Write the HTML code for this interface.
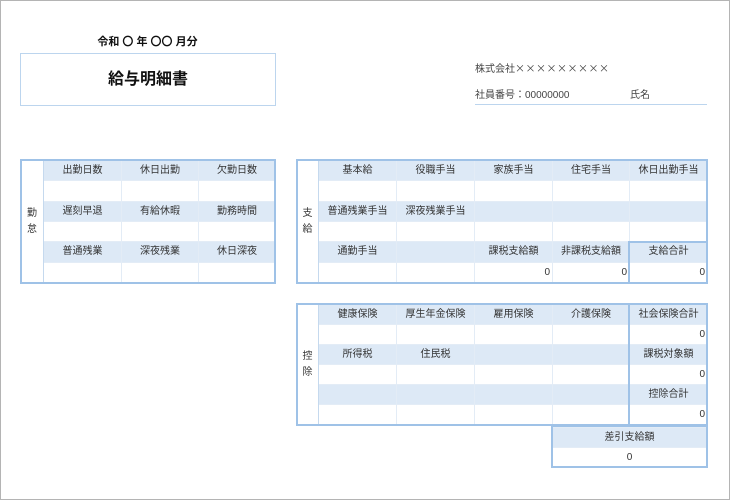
<!DOCTYPE html>
<html><head><meta charset="utf-8"><style>
body{margin:0;width:730px;height:500px;background:#fff;font-family:"Liberation Sans","Noto Sans CJK JP",sans-serif;color:#333;position:relative;overflow:hidden}
.frame{position:absolute;left:0;top:0;width:728px;height:498px;border:1px solid #b4b4b4}
.a{position:absolute}
table{border-collapse:collapse;table-layout:fixed;position:absolute;font-size:10px}
td{border:1px solid #e3ecf6;padding:0;text-align:center;height:19px;line-height:19px;white-space:nowrap;overflow:hidden}
tr.h td{background:#dde9f6}
tr.h td.lab{background:#fff;line-height:16px;border-right:1px solid #c5d9ee}
td.r{text-align:right;padding-right:2px}
.ob{position:absolute;border:2px solid #9fc2e7;box-sizing:border-box;pointer-events:none}
</style></head><body>
<div class="frame"></div>
<div class="a" style="left:20px;top:33px;width:255px;text-align:center;font-size:11px;font-weight:bold;color:#111">令和 〇 年 〇〇 月分</div>
<div class="a" style="left:20px;top:53px;width:254px;height:51px;border:1px solid #bcd5ee;text-align:center;line-height:51px;font-size:16px;font-weight:bold;color:#111">給与明細書</div>
<div class="a" style="left:475px;top:60px;font-size:10px;color:#444">株式会社<span style="font-family:'Noto Sans CJK JP',sans-serif;letter-spacing:0.5px">×××××××××</span></div>
<div class="a" style="left:475px;top:86px;font-size:10px;color:#444">社員番号：00000000</div>
<div class="a" style="left:630px;top:86px;font-size:10px;color:#444">氏名</div>
<div class="a" style="left:475px;top:104px;width:232px;border-top:1px solid #bcd5ee"></div>

<table style="left:20px;top:160px;width:255px;height:123px">
<colgroup><col style="width:23px"><col style="width:78px"><col style="width:77px"><col style="width:77px"></colgroup>
<tr class="h"><td class="lab" rowspan="6">勤<br>怠</td><td>出勤日数</td><td>休日出勤</td><td>欠勤日数</td></tr>
<tr><td></td><td></td><td></td></tr>
<tr class="h"><td>遅刻早退</td><td>有給休暇</td><td>勤務時間</td></tr>
<tr><td></td><td></td><td></td></tr>
<tr class="h"><td>普通残業</td><td>深夜残業</td><td>休日深夜</td></tr>
<tr><td></td><td></td><td></td></tr>
</table>
<div class="ob" style="left:20px;top:159px;width:256px;height:125px"></div>

<table style="left:296px;top:160px;width:411px;height:123px">
<colgroup><col style="width:22px"><col style="width:78px"><col style="width:78px"><col style="width:78px"><col style="width:77px"><col style="width:78px"></colgroup>
<tr class="h"><td class="lab" rowspan="6">支<br>給</td><td>基本給</td><td>役職手当</td><td>家族手当</td><td>住宅手当</td><td>休日出勤手当</td></tr>
<tr><td></td><td></td><td></td><td></td><td></td></tr>
<tr class="h"><td>普通残業手当</td><td>深夜残業手当</td><td></td><td></td><td></td></tr>
<tr><td></td><td></td><td></td><td></td><td></td></tr>
<tr class="h"><td>通勤手当</td><td></td><td>課税支給額</td><td>非課税支給額</td><td>支給合計</td></tr>
<tr><td></td><td></td><td class="r">0</td><td class="r">0</td><td class="r">0</td></tr>
</table>
<div class="ob" style="left:296px;top:159px;width:412px;height:125px"></div>
<div class="ob" style="left:628px;top:241px;width:80px;height:43px"></div>

<table style="left:296px;top:304px;width:411px;height:121px">
<colgroup><col style="width:22px"><col style="width:78px"><col style="width:78px"><col style="width:78px"><col style="width:77px"><col style="width:78px"></colgroup>
<tr class="h"><td class="lab" rowspan="6">控<br>除</td><td>健康保険</td><td>厚生年金保険</td><td>雇用保険</td><td>介護保険</td><td>社会保険合計</td></tr>
<tr><td></td><td></td><td></td><td></td><td class="r">0</td></tr>
<tr class="h"><td>所得税</td><td>住民税</td><td></td><td></td><td>課税対象額</td></tr>
<tr><td></td><td></td><td></td><td></td><td class="r">0</td></tr>
<tr class="h"><td></td><td></td><td></td><td></td><td>控除合計</td></tr>
<tr><td></td><td></td><td></td><td></td><td class="r">0</td></tr>
</table>
<div class="ob" style="left:296px;top:303px;width:412px;height:123px"></div>
<div class="ob" style="left:628px;top:303px;width:80px;height:123px"></div>

<table style="left:552px;top:427px;width:155px;height:40px">
<tr class="h"><td>差引支給額</td></tr>
<tr><td>0</td></tr>
</table>
<div class="ob" style="left:551px;top:425px;width:157px;height:43px"></div>
</body></html>
